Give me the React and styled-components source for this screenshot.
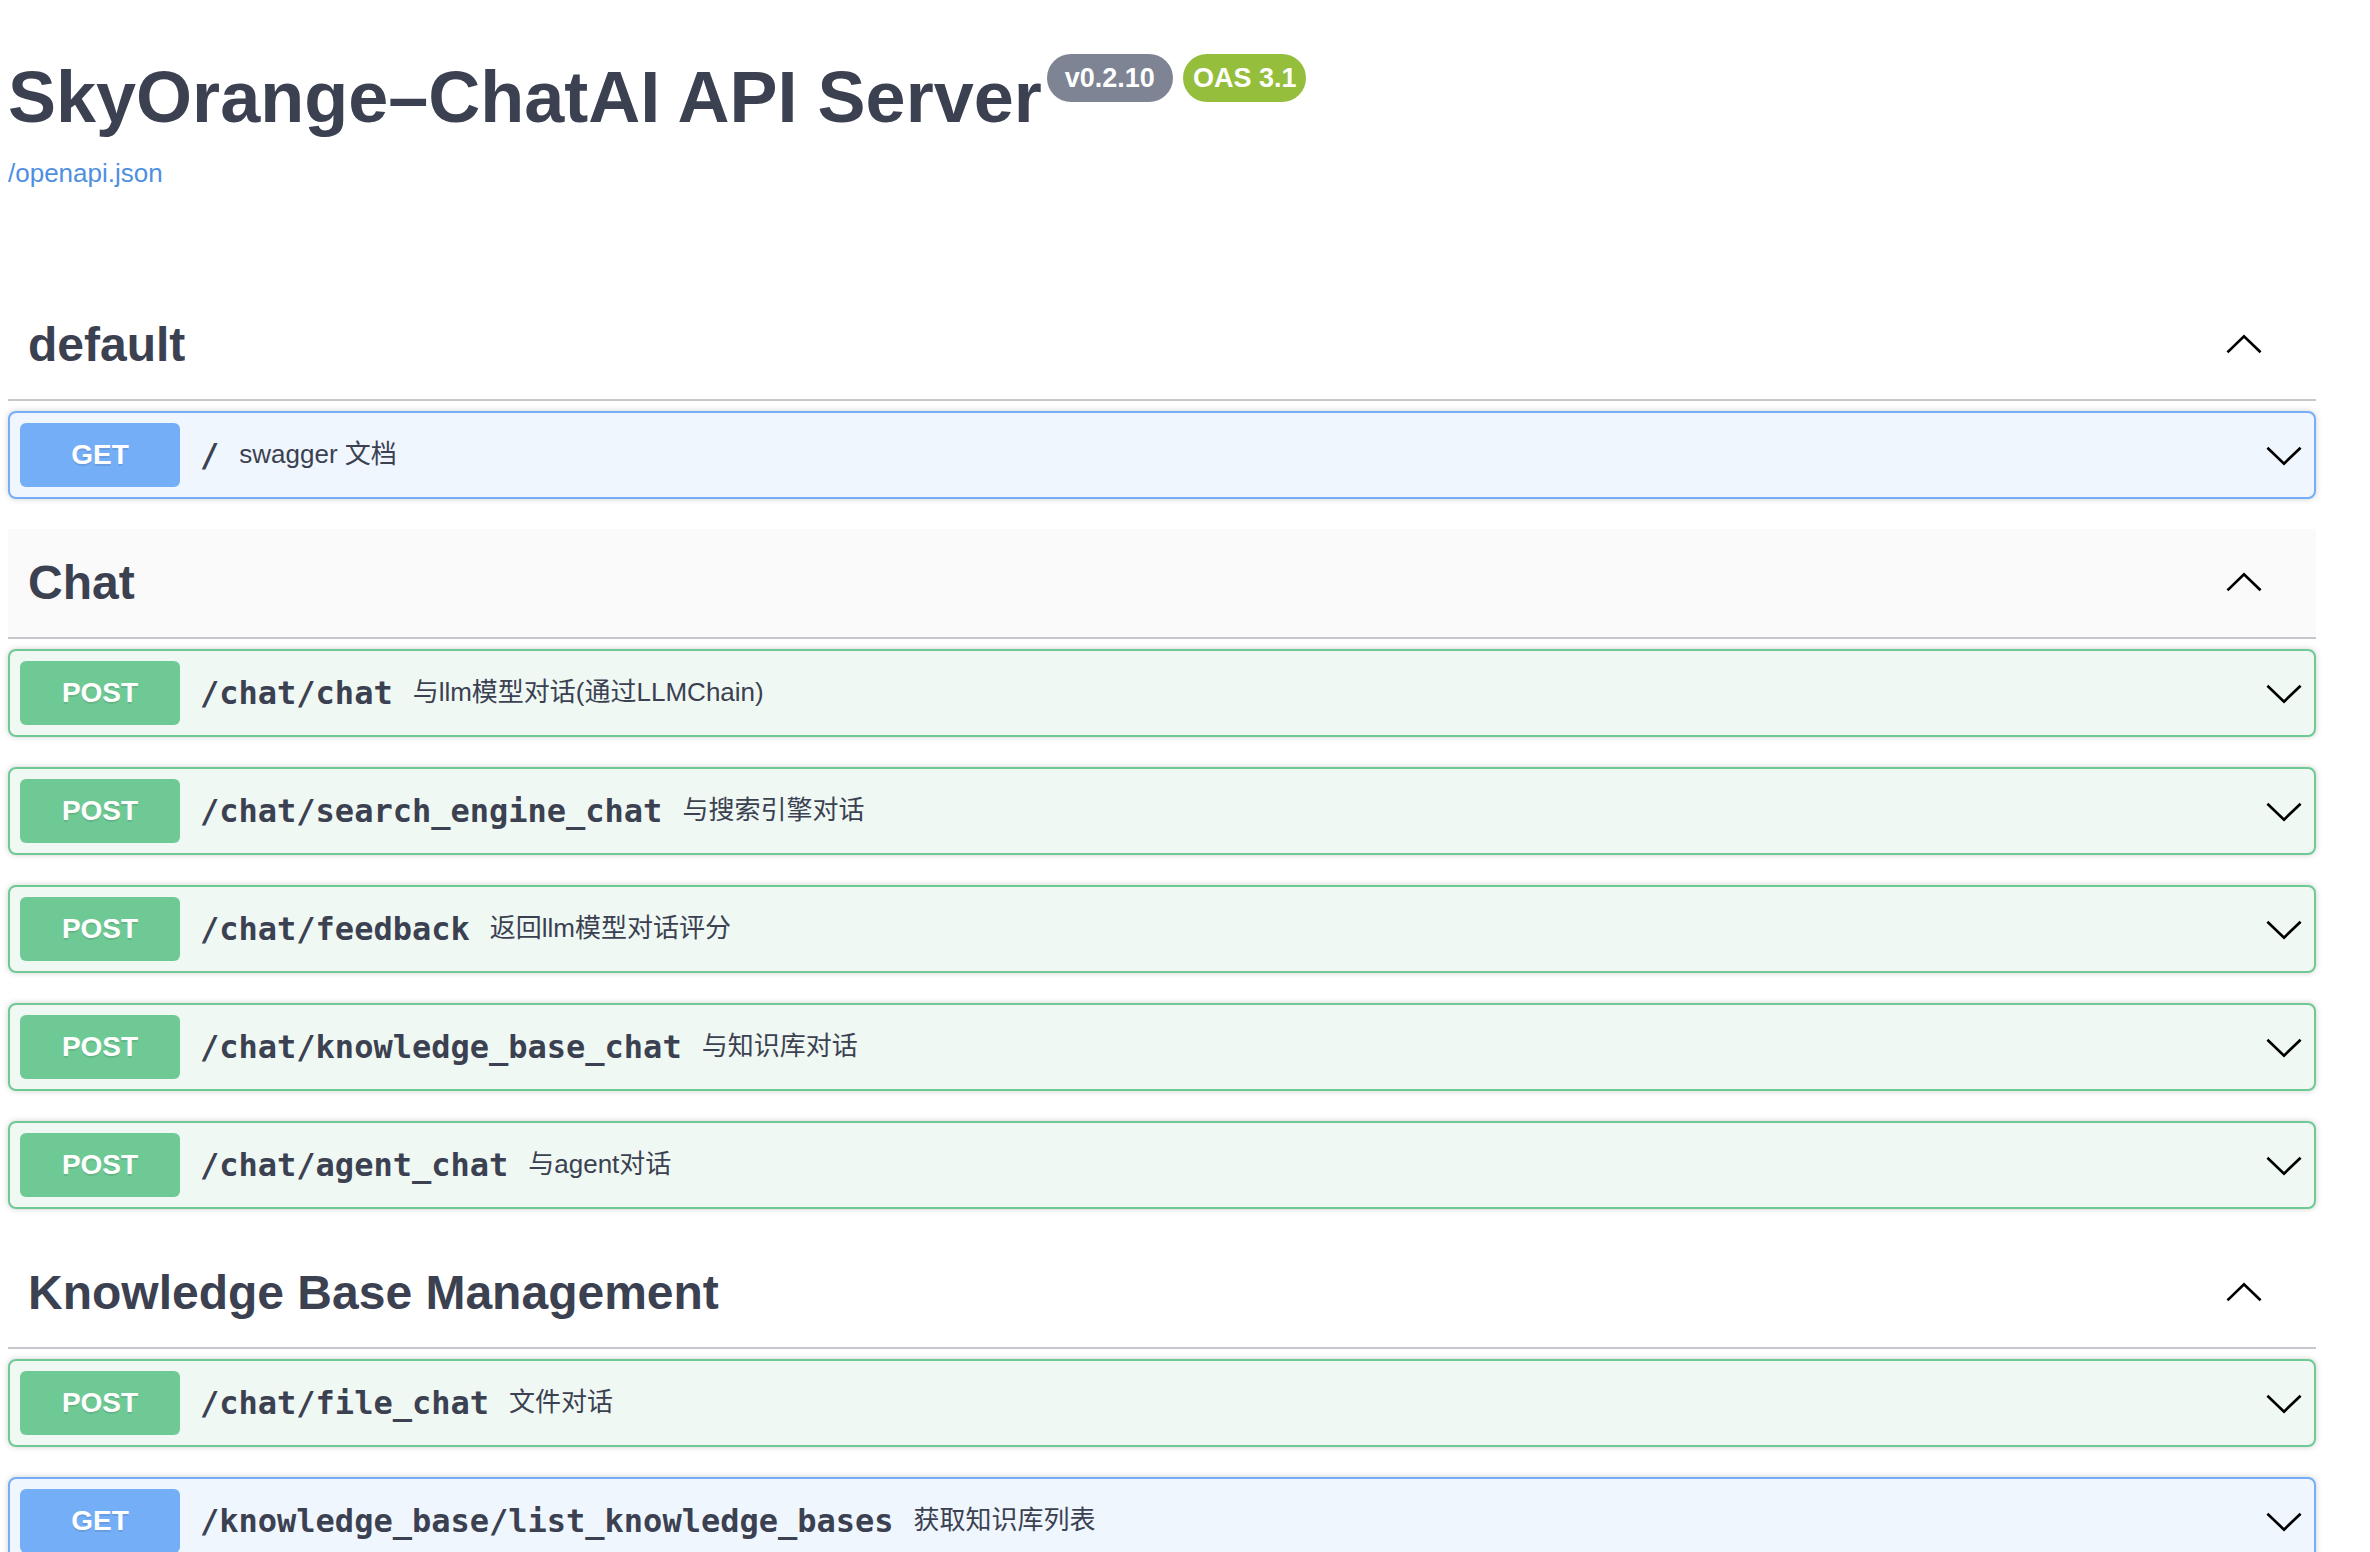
import React from "react";
import styled, { createGlobalStyle } from "styled-components";

const GlobalStyle = createGlobalStyle`
  html, body { margin: 0; padding: 0; background: #ffffff; }
  body {
    font-family: "Liberation Sans", "Noto Sans CJK SC", sans-serif;
    color: #3b4151;
  }
  * { box-sizing: border-box; }
`;

const METHOD = {
  GET: { badge: "#74aef7", border: "#74aef7", bg: "#eff6fe" },
  POST: { badge: "#6fc994", border: "#6fc994", bg: "#eff8f3" },
};

const Page = styled.div`
  width: 2308px;
  margin-left: 8px;
  padding-top: 54px;
`;

const Info = styled.header`
  display: flex;
  flex-direction: column;
  align-items: flex-start;
  margin-bottom: 103px;
`;

const TitleRow = styled.div`
  display: flex;
  align-items: flex-start;
`;

const Title = styled.h2`
  margin: 2px 0 0;
  font-size: 72px;
  line-height: 83px;
  font-weight: 700;
  color: #3b4151;
`;

const Badge = styled.span`
  margin-left: ${(p) => p.$gap}px;
  height: 48px;
  padding: 0 ${(p) => p.$pad}px;
  border-radius: 24px;
  background: ${(p) => p.$bg};
  color: #ffffff;
  font-size: 27px;
  font-weight: 700;
  display: flex;
  align-items: center;
`;

const SpecLink = styled.a`
  margin-top: 19px;
  font-size: 26px;
  line-height: 30px;
  color: #4f8fdf;
  text-decoration: none;
`;

const TagHeader = styled.div`
  display: flex;
  align-items: center;
  justify-content: space-between;
  padding: 20px 52px 20px 20px;
  border-bottom: 2px solid #c6c7cc;
  margin-bottom: 10px;
  background: ${(p) => (p.$hover ? "#fafafa" : "transparent")};
`;

const TagName = styled.h3`
  margin: 0;
  font-size: 48px;
  line-height: 68px;
  font-weight: 700;
  color: #3b4151;
`;

const Op = styled.div`
  margin-bottom: 30px;
  border: 2px solid ${(p) => METHOD[p.$m].border};
  border-radius: 8px;
  background: ${(p) => METHOD[p.$m].bg};
  box-shadow: 0 0 6px rgba(0, 0, 0, 0.19);
`;

const Summary = styled.div`
  display: flex;
  align-items: center;
  padding: 10px;
`;

const Method = styled.span`
  min-width: 160px;
  height: 64px;
  display: flex;
  align-items: center;
  justify-content: center;
  border-radius: 6px;
  background: ${(p) => METHOD[p.$m].badge};
  color: #ffffff;
  font-size: 28px;
  font-weight: 700;
  text-shadow: 0 2px 0 rgba(0, 0, 0, 0.1);
`;

const Path = styled.span`
  padding: 0 20px;
  font-family: "DejaVu Sans Mono", "Liberation Mono", monospace;
  font-size: 32px;
  font-weight: 700;
  color: #3b4151;
  white-space: nowrap;
`;

const Desc = styled.span`
  flex: 1;
  font-size: 26px;
  line-height: 30px;
  padding-bottom: 2px;
  color: #3b4151;
  white-space: nowrap;
`;

const Chevron = styled.svg`
  width: 40px;
  height: 40px;
  flex: none;
`;

const Arrow = ({ up }) => (
  <Chevron viewBox="0 0 20 20">
    <polyline
      points={up ? "2.2,13.2 10,5.7 17.8,13.2" : "2.2,6.8 10,14.3 17.8,6.8"}
      fill="none"
      stroke="#000"
      strokeWidth="1.35"
      strokeLinecap="square"
      strokeLinejoin="miter"
    />
  </Chevron>
);

const sections = [
  {
    name: "default",
    ops: [{ m: "GET", path: "/", desc: "swagger 文档" }],
  },
  {
    name: "Chat",
    hover: true,
    ops: [
      { m: "POST", path: "/chat/chat", desc: "与llm模型对话(通过LLMChain)" },
      { m: "POST", path: "/chat/search_engine_chat", desc: "与搜索引擎对话" },
      { m: "POST", path: "/chat/feedback", desc: "返回llm模型对话评分" },
      { m: "POST", path: "/chat/knowledge_base_chat", desc: "与知识库对话" },
      { m: "POST", path: "/chat/agent_chat", desc: "与agent对话" },
    ],
  },
  {
    name: "Knowledge Base Management",
    ops: [
      { m: "POST", path: "/chat/file_chat", desc: "文件对话" },
      { m: "GET", path: "/knowledge_base/list_knowledge_bases", desc: "获取知识库列表" },
    ],
  },
];

export default function App() {
  return (
    <>
      <GlobalStyle />
      <Page>
        <Info>
          <TitleRow>
            <Title>SkyOrange–ChatAI API Server</Title>
            <Badge $bg="#7e8493" $pad={18} $gap={5}>v0.2.10</Badge>
            <Badge $bg="#94be3b" $pad={10} $gap={10}>OAS 3.1</Badge>
          </TitleRow>
          <SpecLink href="#">/openapi.json</SpecLink>
        </Info>
        {sections.map((s) => (
          <section key={s.name}>
            <TagHeader $hover={s.hover}>
              <TagName>{s.name}</TagName>
              <Arrow up />
            </TagHeader>
            {s.ops.map((op) => (
              <Op key={op.path} $m={op.m}>
                <Summary>
                  <Method $m={op.m}>{op.m}</Method>
                  <Path>{op.path}</Path>
                  <Desc>{op.desc}</Desc>
                  <Arrow />
                </Summary>
              </Op>
            ))}
          </section>
        ))}
      </Page>
    </>
  );
}
